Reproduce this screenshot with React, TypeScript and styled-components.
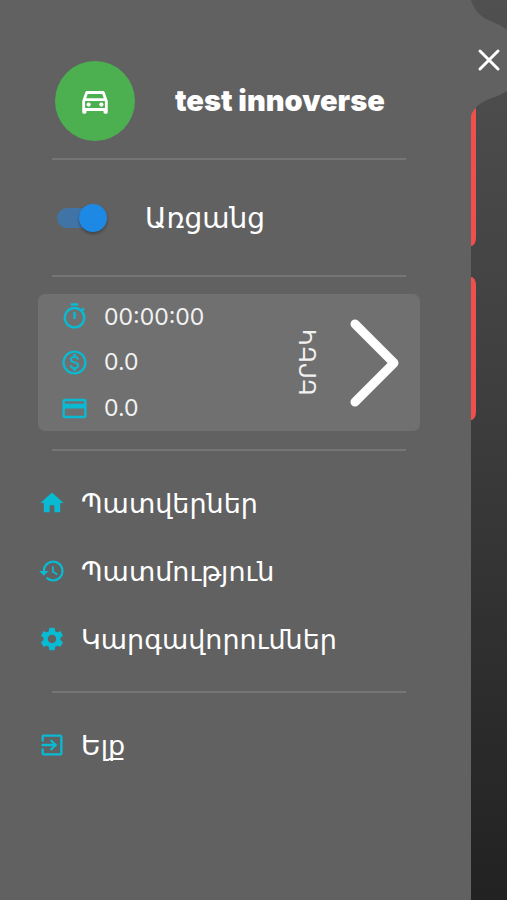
import React, { useState } from "react";
import styled, { createGlobalStyle } from "styled-components";
import {
  MdExitToApp,
  MdHistory,
  MdHome,
  MdOutlineDirectionsCar,
  MdOutlineMonetizationOn,
  MdOutlinePayment,
  MdOutlineTimer,
  MdSettings,
} from "react-icons/md";

const GlobalStyle = createGlobalStyle`
  *, *::before, *::after { box-sizing: border-box; }
  body {
    margin: 0;
    background: #222222;
    color: #ffffff;
    font-family: Inter, "DejaVu Sans", sans-serif;
  }
  button { font: inherit; color: inherit; border: 0; background: none; padding: 0; cursor: pointer; }
`;

const accent = "#08bad2";

const Screen = styled.div`
  display: flex;
  min-height: 100vh;
  overflow: hidden;
`;

const Drawer = styled.aside`
  flex: 1;
  min-width: 0;
  padding: 61px 51px 40px 38px;
  background: #616161;
`;

const Backdrop = styled.div`
  position: relative;
  flex: none;
  width: 36px;
  padding-top: 103px;
  display: flex;
  flex-direction: column;
  gap: 31px;
  background: linear-gradient(#505050, #404040 40%, #2c2c2c 78%, #222222);
`;

const OrderCard = styled.div`
  width: 5px;
  height: 143px;
  border-radius: 0 5px 5px 0 / 0 8px 8px 0;
  background: #f0504b;
`;

const Notch = styled.svg`
  position: absolute;
  top: 0;
  left: 0;
  width: 36px;
  height: 122px;
`;

const CloseButton = styled.button`
  position: absolute;
  top: 46px;
  left: 4px;
  width: 28px;
  height: 28px;
  display: grid;
  place-items: center;
`;

const Profile = styled.header`
  display: flex;
  align-items: center;
  gap: 40px;
  padding: 0 17px;
`;

const Avatar = styled.div`
  flex: none;
  width: 80px;
  height: 80px;
  border-radius: 50%;
  display: grid;
  place-items: center;
  background: #4caf50;
`;

const UserName = styled.h1`
  margin: 0;
  font-size: 29px;
  line-height: 36px;
  font-weight: 900;
  white-space: nowrap;
`;

const Divider = styled.hr<{ $above: number; $below: number }>`
  height: 2px;
  margin: ${(p) => p.$above}px 14px ${(p) => p.$below}px;
  border: 0;
  background: #757575;
`;

const OnlineRow = styled.label`
  display: flex;
  align-items: center;
  gap: 38px;
  padding-left: 19px;
  height: 36px;
  font-size: 28px;
  cursor: pointer;
`;

const Switch = styled.input`
  appearance: none;
  flex: none;
  display: flex;
  align-items: center;
  width: 50px;
  height: 20px;
  margin: 0;
  border-radius: 10px;
  background: #8a8a8a;
  cursor: pointer;

  &::before {
    content: "";
    width: 28px;
    height: 28px;
    border-radius: 50%;
    background: #e0e0e0;
    box-shadow: 0 2px 3px rgba(0, 0, 0, 0.3);
  }
  &:checked { background: #4074a6; justify-content: flex-end; }
  &:checked::before { background: #1e88e5; }
`;

const StatsPanel = styled.section`
  display: flex;
  align-items: center;
  height: 137px;
  padding: 0 20px 0 22px;
  border-radius: 7px;
  background: #707070;
`;

const StatList = styled.ul`
  flex: 1;
  align-self: stretch;
  display: grid;
  grid-template-rows: repeat(3, 1fr);
  margin: 0;
  padding: 0;
  list-style: none;
`;

const Stat = styled.li`
  display: flex;
  align-items: center;
  gap: 15px;
  font-size: 23px;
  color: #f2f2f2;

  svg { flex: none; color: ${accent}; }
`;

const DayLabel = styled.span`
  writing-mode: vertical-rl;
  transform: rotate(180deg);
  font-size: 23px;
  line-height: 28px;
  color: #f2f2f2;
`;

const NextButton = styled.button`
  display: block;
  margin-left: 26px;
  line-height: 0;
`;

const Menu = styled.nav`
  display: flex;
  flex-direction: column;
`;

const MenuItem = styled.a`
  display: flex;
  align-items: center;
  gap: 15px;
  height: 68px;
  font-size: 27px;
  color: #ffffff;
  text-decoration: none;
  white-space: nowrap;

  svg { flex: none; color: ${accent}; }
`;

const stats = [
  { Icon: MdOutlineTimer, value: "00:00:00" },
  { Icon: MdOutlineMonetizationOn, value: "0.0" },
  { Icon: MdOutlinePayment, value: "0.0" },
];

const links = [
  { Icon: MdHome, text: "Պատվերներ" },
  { Icon: MdHistory, text: "Պատմություն" },
  { Icon: MdSettings, text: "Կարգավորումներ" },
];

export default function App() {
  const [online, setOnline] = useState(true);

  return (
    <>
      <GlobalStyle />
      <Screen>
        <Drawer>
          <Profile>
            <Avatar>
              <MdOutlineDirectionsCar size={34} />
            </Avatar>
            <UserName>test innoverse</UserName>
          </Profile>
          <Divider $above={17} $below={40} />
          <OnlineRow>
            <Switch
              type="checkbox"
              role="switch"
              checked={online}
              onChange={(e) => setOnline(e.target.checked)}
            />
            Առցանց
          </OnlineRow>
          <Divider $above={39} $below={17} />
          <StatsPanel>
            <StatList>
              {stats.map(({ Icon, value }, i) => (
                <Stat key={i}>
                  <Icon size={29} />
                  {value}
                </Stat>
              ))}
            </StatList>
            <DayLabel>ԵՐԵԿ</DayLabel>
            <NextButton aria-label="Next">
              <svg width="52" height="90" viewBox="0 0 52 90" fill="none" stroke="#ffffff" strokeWidth="9" strokeLinecap="round" strokeLinejoin="round">
                <path d="M7 6 46 45 7 84" />
              </svg>
            </NextButton>
          </StatsPanel>
          <Divider $above={18} $below={18} />
          <Menu>
            {links.map(({ Icon, text }) => (
              <MenuItem href="#" key={text}>
                <Icon size={28} />
                {text}
              </MenuItem>
            ))}
          </Menu>
          <Divider $above={18} $below={18} />
          <Menu>
            <MenuItem href="#">
              <MdExitToApp size={28} />
              Ելք
            </MenuItem>
          </Menu>
        </Drawer>
        <Backdrop>
          <OrderCard />
          <OrderCard />
          <Notch viewBox="0 0 36 122" aria-hidden="true">
            <path d="M0 0C3 9 8 15 15 19C22 22 30 25 36 30V91C31 94 27 96 21 98C12 101 3 106 0 116Z" fill="#616161" />
          </Notch>
          <CloseButton aria-label="Close">
            <svg width="24" height="24" viewBox="0 0 24 24" fill="none" stroke="#ffffff" strokeWidth="3" strokeLinecap="round">
              <path d="M3 3 21 21M21 3 3 21" />
            </svg>
          </CloseButton>
        </Backdrop>
      </Screen>
    </>
  );
}
